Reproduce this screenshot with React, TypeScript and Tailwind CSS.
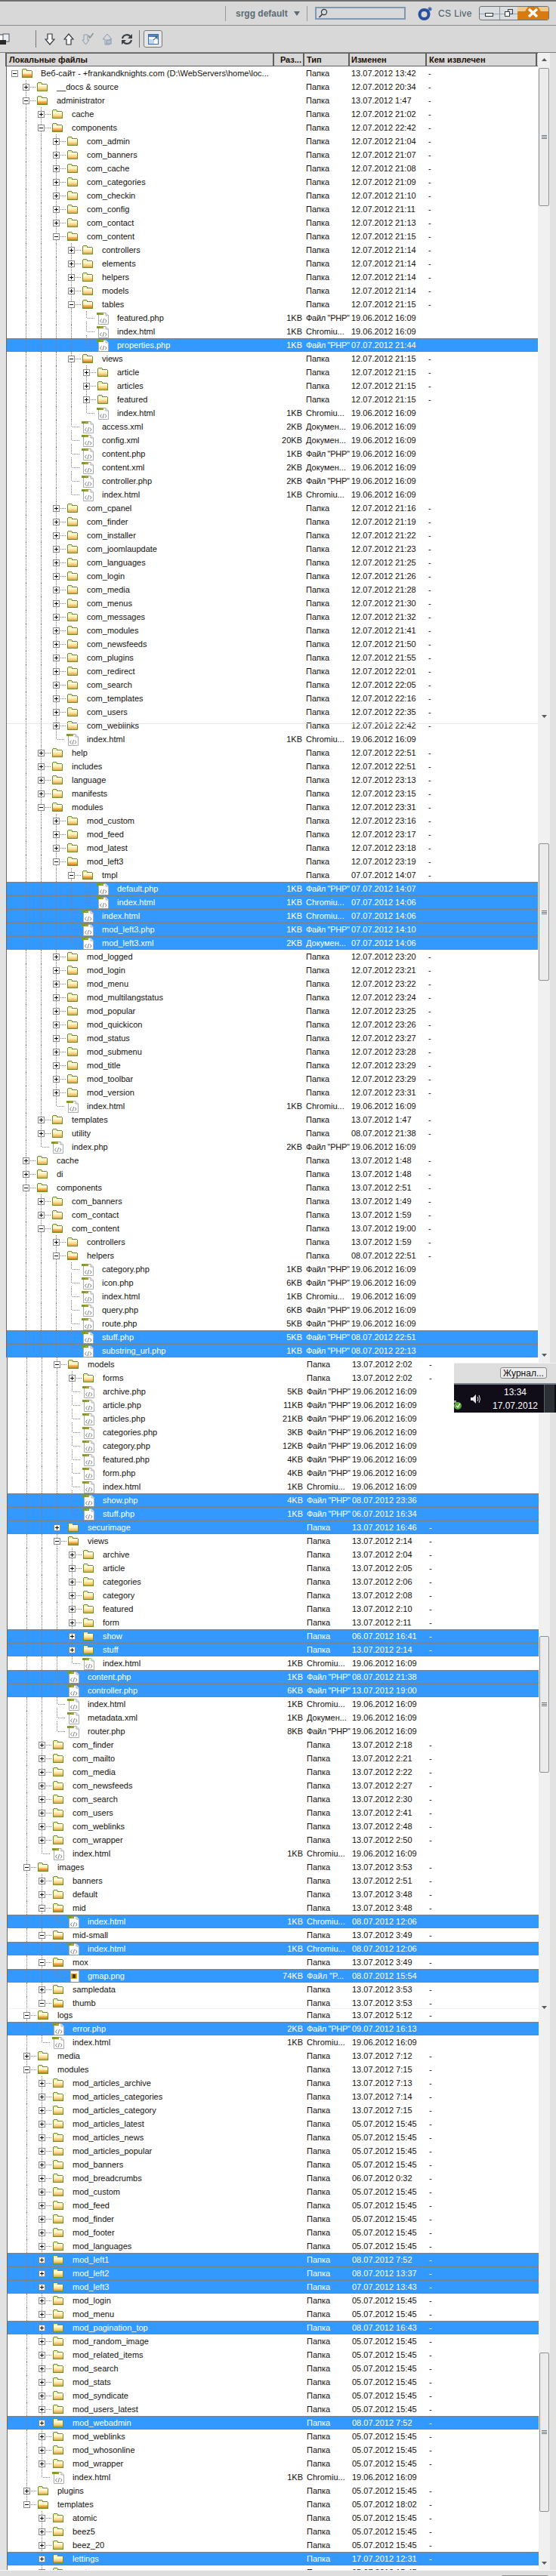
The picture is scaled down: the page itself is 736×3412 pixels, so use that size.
import React from 'react';

// one row of the site panel: kind, tree level, name, date, size, type
type Kind = 'c' | 'o' | 'h' | 'p';
type Row = { kind: Kind; level: number; name: string; date: string; size?: string; type?: string; sel?: boolean };

const PHP = 'Файл "PHP"';
const CHR = 'Chromiu...';
const DOC = 'Докумен...';
const D0 = '19.06.2012 16:09';
const M0 = '05.07.2012 15:45';

const c = (level: number, name: string, date: string, sel = false): Row => ({ kind: 'c', level, name, date, sel });
const o = (level: number, name: string, date: string): Row => ({ kind: 'o', level, name, date });
const f = (level: number, name: string, size: string, type: string, date = D0, sel = false): Row => ({ kind: 'h', level, name, size, type, date, sel });

const ROWS: Row[] = [
  o(0, 'Веб-сайт - +frankandknights.com (D:\\WebServers\\home\\loc...', '13.07.2012 13:42'),
  c(1, '__docs & source', '12.07.2012 20:34'),
  o(1, 'administrator', '13.07.2012 1:47'),
  c(2, 'cache', '12.07.2012 21:02'),
  o(2, 'components', '12.07.2012 22:42'),
  c(3, 'com_admin', '12.07.2012 21:04'),
  c(3, 'com_banners', '12.07.2012 21:07'),
  c(3, 'com_cache', '12.07.2012 21:08'),
  c(3, 'com_categories', '12.07.2012 21:09'),
  c(3, 'com_checkin', '12.07.2012 21:10'),
  c(3, 'com_config', '12.07.2012 21:11'),
  c(3, 'com_contact', '12.07.2012 21:13'),
  o(3, 'com_content', '12.07.2012 21:15'),
  c(4, 'controllers', '12.07.2012 21:14'),
  c(4, 'elements', '12.07.2012 21:14'),
  c(4, 'helpers', '12.07.2012 21:14'),
  c(4, 'models', '12.07.2012 21:14'),
  o(4, 'tables', '12.07.2012 21:15'),
  f(5, 'featured.php', '1KB', PHP),
  f(5, 'index.html', '1KB', CHR),
  f(5, 'properties.php', '1KB', PHP, '07.07.2012 21:44', true),
  o(4, 'views', '12.07.2012 21:15'),
  c(5, 'article', '12.07.2012 21:15'),
  c(5, 'articles', '12.07.2012 21:15'),
  c(5, 'featured', '12.07.2012 21:15'),
  f(5, 'index.html', '1KB', CHR),
  f(4, 'access.xml', '2KB', DOC),
  f(4, 'config.xml', '20KB', DOC),
  f(4, 'content.php', '1KB', PHP),
  f(4, 'content.xml', '2KB', DOC),
  f(4, 'controller.php', '2KB', PHP),
  f(4, 'index.html', '1KB', CHR),
  c(3, 'com_cpanel', '12.07.2012 21:16'),
  c(3, 'com_finder', '12.07.2012 21:19'),
  c(3, 'com_installer', '12.07.2012 21:22'),
  c(3, 'com_joomlaupdate', '12.07.2012 21:23'),
  c(3, 'com_languages', '12.07.2012 21:25'),
  c(3, 'com_login', '12.07.2012 21:26'),
  c(3, 'com_media', '12.07.2012 21:28'),
  c(3, 'com_menus', '12.07.2012 21:30'),
  c(3, 'com_messages', '12.07.2012 21:32'),
  c(3, 'com_modules', '12.07.2012 21:41'),
  c(3, 'com_newsfeeds', '12.07.2012 21:50'),
  c(3, 'com_plugins', '12.07.2012 21:55'),
  c(3, 'com_redirect', '12.07.2012 22:01'),
  c(3, 'com_search', '12.07.2012 22:05'),
  c(3, 'com_templates', '12.07.2012 22:16'),
  c(3, 'com_users', '12.07.2012 22:35'),
  c(3, 'com_weblinks', '12.07.2012 22:42'),
  f(3, 'index.html', '1KB', CHR),
  c(2, 'help', '12.07.2012 22:51'),
  c(2, 'includes', '12.07.2012 22:51'),
  c(2, 'language', '12.07.2012 23:13'),
  c(2, 'manifests', '12.07.2012 23:15'),
  o(2, 'modules', '12.07.2012 23:31'),
  c(3, 'mod_custom', '12.07.2012 23:16'),
  c(3, 'mod_feed', '12.07.2012 23:17'),
  c(3, 'mod_latest', '12.07.2012 23:18'),
  o(3, 'mod_left3', '12.07.2012 23:19'),
  o(4, 'tmpl', '07.07.2012 14:07'),
  f(5, 'default.php', '1KB', PHP, '07.07.2012 14:07', true),
  f(5, 'index.html', '1KB', CHR, '07.07.2012 14:06', true),
  f(4, 'index.html', '1KB', CHR, '07.07.2012 14:06', true),
  f(4, 'mod_left3.php', '1KB', PHP, '07.07.2012 14:10', true),
  f(4, 'mod_left3.xml', '2KB', DOC, '07.07.2012 14:06', true),
  c(3, 'mod_logged', '12.07.2012 23:20'),
  c(3, 'mod_login', '12.07.2012 23:21'),
  c(3, 'mod_menu', '12.07.2012 23:22'),
  c(3, 'mod_multilangstatus', '12.07.2012 23:24'),
  c(3, 'mod_popular', '12.07.2012 23:25'),
  c(3, 'mod_quickicon', '12.07.2012 23:26'),
  c(3, 'mod_status', '12.07.2012 23:27'),
  c(3, 'mod_submenu', '12.07.2012 23:28'),
  c(3, 'mod_title', '12.07.2012 23:29'),
  c(3, 'mod_toolbar', '12.07.2012 23:29'),
  c(3, 'mod_version', '12.07.2012 23:31'),
  f(3, 'index.html', '1KB', CHR),
  c(2, 'templates', '13.07.2012 1:47'),
  c(2, 'utility', '08.07.2012 21:38'),
  f(2, 'index.php', '2KB', PHP),
  c(1, 'cache', '13.07.2012 1:48'),
  c(1, 'di', '13.07.2012 1:48'),
  o(1, 'components', '13.07.2012 2:51'),
  c(2, 'com_banners', '13.07.2012 1:49'),
  c(2, 'com_contact', '13.07.2012 1:59'),
  o(2, 'com_content', '13.07.2012 19:00'),
  c(3, 'controllers', '13.07.2012 1:59'),
  o(3, 'helpers', '08.07.2012 22:51'),
  f(4, 'category.php', '1KB', PHP),
  f(4, 'icon.php', '6KB', PHP),
  f(4, 'index.html', '1KB', CHR),
  f(4, 'query.php', '6KB', PHP),
  f(4, 'route.php', '5KB', PHP),
  f(4, 'stuff.php', '5KB', PHP, '08.07.2012 22:51', true),
  f(4, 'substring_url.php', '1KB', PHP, '08.07.2012 22:13', true),
  o(3, 'models', '13.07.2012 2:02'),
  c(4, 'forms', '13.07.2012 2:02'),
  f(4, 'archive.php', '5KB', PHP),
  f(4, 'article.php', '11KB', PHP),
  f(4, 'articles.php', '21KB', PHP),
  f(4, 'categories.php', '3KB', PHP),
  f(4, 'category.php', '12KB', PHP),
  f(4, 'featured.php', '4KB', PHP),
  f(4, 'form.php', '4KB', PHP),
  f(4, 'index.html', '1KB', CHR),
  f(4, 'show.php', '4KB', PHP, '08.07.2012 23:36', true),
  f(4, 'stuff.php', '1KB', PHP, '06.07.2012 16:34', true),
  c(3, 'securimage', '13.07.2012 16:46', true),
  o(3, 'views', '13.07.2012 2:14'),
  c(4, 'archive', '13.07.2012 2:04'),
  c(4, 'article', '13.07.2012 2:05'),
  c(4, 'categories', '13.07.2012 2:06'),
  c(4, 'category', '13.07.2012 2:08'),
  c(4, 'featured', '13.07.2012 2:10'),
  c(4, 'form', '13.07.2012 2:11'),
  c(4, 'show', '06.07.2012 16:41', true),
  c(4, 'stuff', '13.07.2012 2:14', true),
  f(4, 'index.html', '1KB', CHR),
  f(3, 'content.php', '1KB', PHP, '08.07.2012 21:38', true),
  f(3, 'controller.php', '6KB', PHP, '13.07.2012 19:00', true),
  f(3, 'index.html', '1KB', CHR),
  f(3, 'metadata.xml', '1KB', DOC),
  f(3, 'router.php', '8KB', PHP),
  c(2, 'com_finder', '13.07.2012 2:18'),
  c(2, 'com_mailto', '13.07.2012 2:21'),
  c(2, 'com_media', '13.07.2012 2:22'),
  c(2, 'com_newsfeeds', '13.07.2012 2:27'),
  c(2, 'com_search', '13.07.2012 2:30'),
  c(2, 'com_users', '13.07.2012 2:41'),
  c(2, 'com_weblinks', '13.07.2012 2:48'),
  c(2, 'com_wrapper', '13.07.2012 2:50'),
  f(2, 'index.html', '1KB', CHR),
  o(1, 'images', '13.07.2012 3:53'),
  c(2, 'banners', '13.07.2012 2:51'),
  c(2, 'default', '13.07.2012 3:48'),
  o(2, 'mid', '13.07.2012 3:48'),
  f(3, 'index.html', '1KB', CHR, '08.07.2012 12:06', true),
  o(2, 'mid-small', '13.07.2012 3:49'),
  f(3, 'index.html', '1KB', CHR, '08.07.2012 12:06', true),
  o(2, 'mox', '13.07.2012 3:49'),
  { kind: 'p', level: 3, name: 'gmap.png', size: '74KB', type: 'Файл "P...', date: '08.07.2012 15:54', sel: true },
  c(2, 'sampledata', '13.07.2012 3:53'),
  o(2, 'thumb', '13.07.2012 3:53'),
  o(1, 'logs', '13.07.2012 5:12'),
  f(2, 'error.php', '2KB', PHP, '09.07.2012 16:13', true),
  f(2, 'index.html', '1KB', CHR),
  c(1, 'media', '13.07.2012 7:12'),
  o(1, 'modules', '13.07.2012 7:15'),
  c(2, 'mod_articles_archive', '13.07.2012 7:13'),
  c(2, 'mod_articles_categories', '13.07.2012 7:14'),
  c(2, 'mod_articles_category', '13.07.2012 7:15'),
  c(2, 'mod_articles_latest', M0),
  c(2, 'mod_articles_news', M0),
  c(2, 'mod_articles_popular', M0),
  c(2, 'mod_banners', M0),
  c(2, 'mod_breadcrumbs', '06.07.2012 0:32'),
  c(2, 'mod_custom', M0),
  c(2, 'mod_feed', M0),
  c(2, 'mod_finder', M0),
  c(2, 'mod_footer', M0),
  c(2, 'mod_languages', M0),
  c(2, 'mod_left1', '08.07.2012 7:52', true),
  c(2, 'mod_left2', '08.07.2012 13:37', true),
  c(2, 'mod_left3', '07.07.2012 13:43', true),
  c(2, 'mod_login', M0),
  c(2, 'mod_menu', M0),
  c(2, 'mod_pagination_top', '08.07.2012 16:43', true),
  c(2, 'mod_random_image', M0),
  c(2, 'mod_related_items', M0),
  c(2, 'mod_search', M0),
  c(2, 'mod_stats', M0),
  c(2, 'mod_syndicate', M0),
  c(2, 'mod_users_latest', M0),
  c(2, 'mod_webadmin', '08.07.2012 7:52', true),
  c(2, 'mod_weblinks', M0),
  c(2, 'mod_whosonline', M0),
  c(2, 'mod_wrapper', M0),
  f(2, 'index.html', '1KB', CHR),
  c(1, 'plugins', M0),
  o(1, 'templates', '05.07.2012 18:02'),
  c(2, 'atomic', M0),
  c(2, 'beez5', M0),
  c(2, 'beez_20', M0),
  c(2, 'lettings', '17.07.2012 12:31', true),
  c(2, 'system', M0),
];

// the screenshot is stitched: the tree moves 1px right at "models", and "thumb" loses 2px
const SPLIT_AT = 95;
const CLIPPED_ROW = 142;

function continues(i: number, level: number) {
  for (let j = i + 1; j < ROWS.length; j++) {
    if (ROWS[j].level < level) return false;
    if (ROWS[j].level === level) return true;
  }
  return false;
}

function Folder({ open }: { open: boolean }) {
  return (
    <svg width="16" height="16" viewBox="0 0 16 16" className="shrink-0" shapeRendering="crispEdges">
      <path d="M1 3h1v-1h5v1h1v1h6v1h1v9H1z" fill="#6f8f24" />
      <rect x="2" y="3" width="5" height="2" fill="#e8f0b0" />
      <rect x="2" y="5" width="12" height="2" fill="#fffce0" />
      <rect x="2" y="7" width="12" height="2" fill="#fbeeb8" />
      <rect x="2" y="9" width="12" height="2" fill={open ? '#f0b860' : '#f6d88c'} />
      <rect x="2" y="11" width="12" height="2" fill={open ? '#dc8a30' : '#e6b262'} />
    </svg>
  );
}

function FileIcon({ png }: { png?: boolean }) {
  if (png) {
    return (
      <svg width="16" height="16" viewBox="0 0 16 16" className="shrink-0" shapeRendering="crispEdges">
        <rect x="4" y="1" width="11" height="15" fill="#ffffff" stroke="#b0b0b0" />
        <rect x="5" y="5" width="8" height="7" fill="#e0a020" />
        <rect x="7" y="6" width="4" height="5" fill="#4a3a10" />
      </svg>
    );
  }
  return (
    <svg width="16" height="17" viewBox="0 0 16 17" className="shrink-0 self-start mt-px">
      <path d="M2.5 1.5H12L15.5 5V16.5H2.5Z" fill="#ffffff" stroke="#a9adb2" />
      <path d="M12 1.5V5H15.5" fill="#e6e8ea" stroke="#a9adb2" />
      <rect x="0" y="1" width="9" height="3" fill="#7f9a2c" />
      <rect x="5" y="2" width="4" height="1" fill="#e09a30" />
      <path d="M6.5 9.5L4.5 12L6.5 14.5M11 9.5L13 12L11 14.5M9.5 9L8 15" fill="none" stroke="#7c8186" />
    </svg>
  );
}

function Connector({ row, next }: { row: Row; next: boolean }) {
  const root = row.level === 0;
  const hasBox = row.kind === 'c' || row.kind === 'o';
  const dots = { stroke: '#808080', strokeDasharray: '1 1', fill: 'none' };
  return (
    <svg width={root ? 13 : 18} height="18" viewBox={root ? '0 0 13 18' : '0 0 18 18'} className="shrink-0" shapeRendering="crispEdges">
      {!root && <path d={hasBox ? 'M4.5 0V5' : 'M4.5 0V10'} {...dots} />}
      {next && <path d="M4.5 14V18" {...dots} />}
      {!root && <path d={hasBox ? 'M10 9.5H18' : 'M6 9.5H16'} {...dots} />}
      {hasBox && (
        <>
          <rect x="0.5" y="5.5" width="8" height="8" fill="#ffffff" stroke="#8a8a8a" />
          <path d={row.kind === 'c' ? 'M2 9.5H7M4.5 7V12' : 'M2 9.5H7'} stroke="#000000" />
        </>
      )}
    </svg>
  );
}

function TreeRow({ row, index }: { row: Row; index: number }) {
  const guides: number[] = [];
  for (let l = 1; l < row.level; l++) guides.push(l);
  const isFolder = row.kind === 'c' || row.kind === 'o';
  const sel = row.sel;

  return (
    <div className={index === CLIPPED_ROW ? 'h-[16px] overflow-hidden' : 'h-[18px]'}>
      <div
        className={
          sel
            ? 'flex h-[18px] w-[703px] items-center bg-[#3399ff] text-white outline outline-1 outline-dotted outline-[#c2701a] -outline-offset-1'
            : 'flex h-[18px] w-[703px] items-center text-[#14100c]'
        }
      >
        <div className="flex h-[18px] w-[353px] shrink-0 items-center overflow-hidden whitespace-nowrap">
          {row.level === 0 ? (
            <div className="w-[6px] shrink-0" />
          ) : (
            <div className="w-[25px] shrink-0" />
          )}
          {guides.map((l) => (
            <div
              key={l}
              className={
                continues(index, l)
                  ? 'h-[18px] w-[20px] shrink-0 border-l border-dotted border-[#808080]'
                  : 'h-[18px] w-[20px] shrink-0'
              }
            />
          ))}
          <div className={row.level === 0 ? 'flex shrink-0' : '-ml-[4px] flex shrink-0'}>
            <Connector row={row} next={row.level > 0 && continues(index, row.level)} />
          </div>
          {isFolder ? <Folder open={row.kind === 'o'} /> : <FileIcon png={row.kind === 'p'} />}
          <span className={row.level === 0 ? 'ml-[10px]' : 'ml-[11px]'}>{row.name}</span>
        </div>
        <div className="w-[40px] shrink-0 pr-[2px] text-right">{row.size}</div>
        <div className={row.type === PHP ? 'w-[60px] shrink-0 whitespace-nowrap pl-[3px] tracking-[-0.3px]' : 'w-[60px] shrink-0 whitespace-nowrap pl-[3px]'}>
          {row.type ?? 'Папка'}
        </div>
        <div className="w-[102px] shrink-0 whitespace-nowrap pl-[3px]">{row.date}</div>
        <div className="pl-[3px]">{isFolder ? '-' : ''}</div>
      </div>
    </div>
  );
}

function Grip() {
  return (
    <div className="flex flex-col gap-px">
      <div className="h-px w-[7px] bg-[#6f757c]" />
      <div className="h-px w-[7px] bg-[#6f757c]" />
      <div className="h-px w-[7px] bg-[#6f757c]" />
    </div>
  );
}

function Thumb({ mt, h }: { mt: string; h: string }) {
  return (
    <div className={`${mt} ${h} mx-px flex shrink-0 items-center justify-center rounded-[2px] border border-[#8b9097] bg-[#ebebeb]`}>
      <Grip />
    </div>
  );
}

function DownArrow({ mt }: { mt: string }) {
  return (
    <svg width="7" height="4" viewBox="0 0 7 4" className={`${mt} mx-auto shrink-0`}>
      <path d="M0 0H7L3.5 4Z" fill="#555a60" />
    </svg>
  );
}

function ToolbarIcons() {
  return (
    <div className="flex h-[36px] items-center border-b border-[#7c7c7c] bg-[#d8d8d8]">
      <svg width="13" height="16" viewBox="0 0 13 16" className="shrink-0">
        <rect x="-4" y="2" width="9" height="11" fill="#ffffff" stroke="#404040" />
        <rect x="4" y="1" width="8" height="10" fill="#e8eef4" stroke="#555555" />
        <rect x="0" y="9" width="8" height="6" fill="#2a2a2a" />
      </svg>
      <div className="ml-[34px] h-[23px] w-px bg-[#777777]" />
      <svg width="14" height="16" viewBox="0 0 14 16" className="ml-[11px] shrink-0">
        <path d="M4 1H10V8H13L7 15L1 8H4Z" fill="#ffffff" stroke="#333a40" strokeWidth="1.2" />
      </svg>
      <svg width="14" height="16" viewBox="0 0 14 16" className="ml-[11px] shrink-0">
        <path d="M4 15H10V8H13L7 1L1 8H4Z" fill="#ffffff" stroke="#333a40" strokeWidth="1.2" />
      </svg>
      <svg width="17" height="17" viewBox="0 0 17 17" className="ml-[10px] shrink-0">
        <path d="M3 3H8V10H10L5.5 16L1 10H3Z" fill="#d8d8d8" stroke="#8a9cb0" />
        <path d="M9 4L11 7L15.5 1" fill="none" stroke="#8c949c" strokeWidth="1.6" />
      </svg>
      <svg width="14" height="16" viewBox="0 0 14 16" className="ml-[10px] shrink-0">
        <path d="M4 15H10V8H13L7 1L1 8H4Z" fill="#d8d8d8" stroke="#8a9cb0" />
        <rect x="6" y="9" width="6" height="5" fill="#b8c0c8" stroke="#8a9cb0" />
      </svg>
      <svg width="16" height="16" viewBox="0 0 16 16" className="ml-[11px] shrink-0">
        <path d="M2 7A6 6 0 0 1 13 5M14 9A6 6 0 0 1 3 11" fill="none" stroke="#3a4046" strokeWidth="2.2" />
        <path d="M15 1V7H9Z M1 15V9H7Z" fill="#3a4046" />
      </svg>
      <div className="ml-[8px] h-[23px] w-px bg-[#777777]" />
      <div className="ml-[5px] flex h-[23px] w-[25px] items-center justify-center rounded-[3px] border border-[#7a7a7a] bg-[#e4e6e8]">
        <svg width="14" height="14" viewBox="0 0 14 14" shapeRendering="crispEdges">
          <rect x="0.5" y="0.5" width="13" height="13" fill="#ffffff" stroke="#3f6f9f" />
          <rect x="1" y="1" width="12" height="3" fill="#4f86bf" />
          <rect x="1" y="7" width="7" height="6" fill="#bcd6ee" />
          <path d="M7 8L12 4M9 4H12V7" stroke="#204060" fill="none" shapeRendering="auto" />
        </svg>
      </div>
    </div>
  );
}

function TopBar() {
  return (
    <div className="flex h-[34px] items-center border-t-2 border-b border-t-[#6e6e6e] border-b-[#8c8c8c] bg-[#d8d8d8]">
      <div className="ml-[298px] h-[20px] w-px bg-[#9a9a9a]" />
      <span className="ml-[13px] w-[66px] whitespace-nowrap text-[12px] font-bold text-[#5a6b74]">srgg default</span>
      <svg width="8" height="6" viewBox="0 0 8 6" className="ml-[11px]">
        <path d="M0 0H8L4 6Z" fill="#5a6b74" />
      </svg>
      <div className="ml-[9px] h-[20px] w-px bg-[#9a9a9a]" />
      <div className="ml-[10px] flex h-[17px] w-[120px] items-center border-2 border-[#7f97b0] bg-[#d8d8d8] pl-[2px]">
        <svg width="13" height="13" viewBox="0 0 13 13">
          <circle cx="8" cy="5" r="3.6" fill="none" stroke="#2e3a46" strokeWidth="1.2" />
          <path d="M5.5 8L1.5 12" stroke="#2e3a46" strokeWidth="1.6" />
        </svg>
      </div>
      <svg width="20" height="18" viewBox="0 0 20 18" className="ml-[16px]">
        <circle cx="8.5" cy="10" r="6" fill="none" stroke="#2a4f9c" strokeWidth="4" />
        <path d="M16 0V6M13 3H19M14 1L18 5M18 1L14 5" stroke="#2a4f9c" />
      </svg>
      <span className="ml-[7px] w-[36px] whitespace-nowrap text-[12px] tracking-[0.4px] text-[#41555f]">CS Live</span>
      <div className="ml-[18px] flex h-[19px] w-[93px] overflow-hidden rounded-[3px] border border-[#6d7277] bg-[#d9dde0]">
        <svg width="26" height="17" viewBox="0 0 26 17" className="shrink-0" shapeRendering="crispEdges">
          <rect x="0" y="9" width="26" height="1" fill="#8fa6bc" />
          <rect x="7.5" y="8.5" width="10" height="4" fill="#ffffff" stroke="#30383f" />
        </svg>
        <svg width="24" height="17" viewBox="0 0 24 17" className="shrink-0 border-l border-[#8a8f94]" shapeRendering="crispEdges">
          <rect x="0" y="9" width="24" height="1" fill="#8fa6bc" />
          <rect x="10.5" y="3.5" width="7" height="6" fill="#d9dde0" stroke="#30383f" />
          <rect x="6.5" y="6.5" width="7" height="6" fill="#ffffff" stroke="#30383f" />
        </svg>
        <svg width="41" height="17" viewBox="0 0 41 17" className="shrink-0">
          <rect x="0" y="0" width="41" height="17" fill="#d97a10" />
          <path d="M0 0H14L10 6H0Z M41 0H27L31 6H41Z" fill="#efc88a" />
          <path d="M15 3L26 13M26 3L15 13" stroke="#ffffff" strokeWidth="3.4" />
        </svg>
      </div>
    </div>
  );
}

function ColumnHeaders() {
  const cell = 'flex h-[16px] items-center border-r-2 border-[#5f5f5f] font-bold text-[#1c0f06] whitespace-nowrap';
  return (
    <div className="flex h-[18px] bg-[#e2e2e2] pl-[7px]">
      <div className="flex h-[18px] w-[705px] border-y border-l-2 border-[#5f5f5f] bg-[#d8d8d8]">
        <div className={`${cell} w-[354px] pl-[3px]`}>Локальные файлы</div>
        <div className={`${cell} w-[40px] justify-end pr-[2px]`}>Раз...</div>
        <div className={`${cell} w-[60px] pl-[3px]`}>Тип</div>
        <div className={`${cell} w-[102px] pl-[2px]`}>Изменен</div>
        <div className={`${cell} w-[146px] pl-[3px]`}>Кем извлечен</div>
      </div>
      <div className="flex h-[18px] w-[16px] items-center justify-center bg-[#f0f0f0]">
        <svg width="7" height="4" viewBox="0 0 7 4">
          <path d="M0 4H7L3.5 0Z" fill="#555a60" />
        </svg>
      </div>
    </div>
  );
}

export default function App() {
  const upper = ROWS.slice(0, SPLIT_AT);
  const lower = ROWS.slice(SPLIT_AT);

  return (
    <div
      className="relative h-[3412px] w-[736px] overflow-hidden bg-[#e2e2e2] text-[11px] leading-[18px]"
      style={{ fontFamily: '"Liberation Sans", Arial, sans-serif' }}
    >
      <TopBar />
      <ToolbarIcons />
      <ColumnHeaders />

      <div className="flex h-[1710px] overflow-hidden pl-[8px]">
        <div className="w-[704px] shrink-0 border-l border-[#6a6a6a] bg-white">
          {upper.map((row, i) => (
            <TreeRow key={i} row={row} index={i} />
          ))}
        </div>
        <div className="flex h-full w-[16px] shrink-0 flex-col bg-[#f0f0f0]">
          <Thumb mt="mt-[2px]" h="h-[183px]" />
          <DownArrow mt="mt-[674px]" />
          <Thumb mt="mt-[166px]" h="h-[182px]" />
          <DownArrow mt="mt-[494px]" />
        </div>
      </div>

      <div className="flex h-[1606px] overflow-hidden pl-[9px]">
        <div className="w-[704px] shrink-0 border-l border-[#6a6a6a] bg-white">
          {lower.map((row, i) => (
            <TreeRow key={i} row={row} index={i + SPLIT_AT} />
          ))}
        </div>
        <div className="flex h-full w-[15px] shrink-0 flex-col bg-[#f0f0f0]">
          <Thumb mt="mt-[369px]" h="h-[181px]" />
          <DownArrow mt="mt-[309px]" />
          <Thumb mt="mt-[455px]" h="h-[211px]" />
          <DownArrow mt="mt-[66px]" />
        </div>
      </div>

      <div className="flex h-[8px] justify-end border-t border-[#f4f4f4] bg-[#dedede] pr-[10px]">
        <div className="mt-[6px] h-[2px] w-[62px] rounded-t-[3px] border-t border-[#8a8a8a]" />
      </div>

      {/* seam lines left over from stitching the screenshot */}
      <div className="absolute left-[9px] top-[958px] h-px w-[703px] bg-[#e6e6e6]" />
      <div className="absolute left-[10px] top-[2660px] h-px w-[703px] bg-[#f2f2f2]" />

      {/* piece of the Windows taskbar pasted over the list */}
      <div className="absolute left-[601px] top-[1805px] w-[135px]">
        <div className="flex h-[27px] justify-end border-t border-[#f2f2f2] bg-[#dedede] pr-[12px] pt-[5px]">
          <div className="flex h-[15px] w-[62px] items-center justify-center rounded-[3px] border border-[#888888] bg-[#ededed] text-[12px] text-[#111111]">
            Журнал...
          </div>
        </div>
        <div className="flex h-[39px] items-center border-t-2 border-[#7a8088] bg-[#100d18]">
          <svg width="10" height="14" viewBox="0 0 10 14" className="mt-[14px] shrink-0">
            <path d="M0 2H3V5H0Z" fill="#9aa0a8" />
            <circle cx="5" cy="9" r="5" fill="#5aa838" />
            <path d="M3 9L5 11L8 6" fill="none" stroke="#ffffff" strokeWidth="1.3" />
          </svg>
          <svg width="16" height="16" viewBox="0 0 16 16" className="ml-[11px] shrink-0">
            <path d="M1 6H4L8 2V14L4 10H1Z" fill="#e8e8e8" />
            <path d="M10 5Q12 8 10 11M12 3Q15 8 12 13" fill="none" stroke="#e8e8e8" />
          </svg>
          <div className="ml-[13px] flex w-[62px] flex-col items-center text-white">
            <span className="text-[12px] leading-[18px]">13:34</span>
            <span className="text-[12px] leading-[18px]">17.07.2012</span>
          </div>
          <div className="ml-[7px] h-full w-[14px] border-l border-[#5a5f66] bg-[#2c3034]" />
        </div>
      </div>
    </div>
  );
}
